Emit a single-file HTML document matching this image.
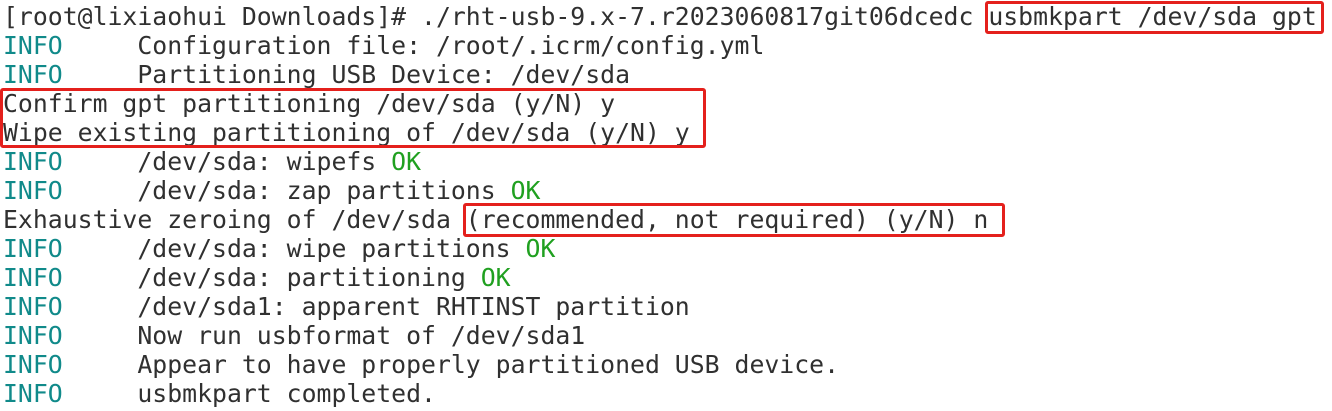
<!DOCTYPE html>
<html><head><style>
body{margin:0;background:#fff;width:1332px;height:411px;overflow:hidden;position:relative}
pre{margin:0;position:absolute;left:3px;top:2px;font-family:"DejaVu Sans Mono","Liberation Mono",monospace;font-size:24.8px;line-height:29px;color:#303030}
.i{color:#108a8a}.g{color:#20a020}
.b{position:absolute;border:3px solid #e4201c;border-radius:3px;box-sizing:border-box}
</style></head><body>
<pre>[root@lixiaohui Downloads]# ./rht-usb-9.x-7.r2023060817git06dcedc usbmkpart /dev/sda gpt
<span class="i">INFO</span>     Configuration file: /root/.icrm/config.yml
<span class="i">INFO</span>     Partitioning USB Device: /dev/sda
Confirm gpt partitioning /dev/sda (y/N) y
Wipe existing partitioning of /dev/sda (y/N) y
<span class="i">INFO</span>     /dev/sda: wipefs <span class="g">OK</span>
<span class="i">INFO</span>     /dev/sda: zap partitions <span class="g">OK</span>
Exhaustive zeroing of /dev/sda (recommended, not required) (y/N) n
<span class="i">INFO</span>     /dev/sda: wipe partitions <span class="g">OK</span>
<span class="i">INFO</span>     /dev/sda: partitioning <span class="g">OK</span>
<span class="i">INFO</span>     /dev/sda1: apparent RHTINST partition
<span class="i">INFO</span>     Now run usbformat of /dev/sda1
<span class="i">INFO</span>     Appear to have properly partitioned USB device.
<span class="i">INFO</span>     usbmkpart completed.</pre>
<div class="b" style="left:985px;top:1px;width:339px;height:33px"></div>
<div class="b" style="left:0;top:88px;width:706px;height:60px"></div>
<div class="b" style="left:463px;top:203px;width:542px;height:34px"></div>
</body></html>
